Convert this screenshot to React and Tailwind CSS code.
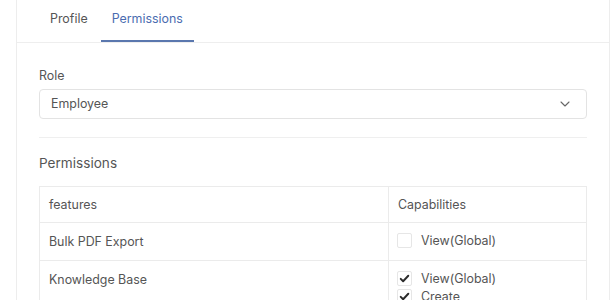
import { ChevronDown } from 'lucide-react'

const rows = [
    { feature: 'Bulk PDF Export', caps: [{ label: 'View(Global)', checked: false }] },
    {
        feature: 'Knowledge Base',
        caps: [
            { label: 'View(Global)', checked: true },
            { label: 'Create', checked: true },
            { label: 'Edit', checked: true }
        ]
    }
]

const Checkbox = ({ checked }) => (
    <span className="flex h-[15px] w-[15px] shrink-0 items-center justify-center rounded-[2px] border border-[#e6e6e6] bg-white">
        {checked && (
            <svg viewBox="0 0 16 16" className="h-[11px] w-[11px]">
                <path d="M2.5 8.5 L6 12 L13.5 4" fill="none" stroke="#2b2b2b" strokeWidth="2.8" strokeLinecap="round" strokeLinejoin="round" />
            </svg>
        )}
    </span>
)

const App = () => {
    return (
        <div className="h-[300px] overflow-hidden bg-white pl-4 font-['Inter',sans-serif] text-[12.4px] text-[#555]">
            <div className="h-[400px] border-x border-[#ededed] bg-white">
                {/* Tabs */}
                <div className="flex gap-0.5 border-b border-[#eeeeee] px-[22px]">
                    <button className="border-b-2 border-transparent px-[11px] pt-[9px] pb-[11px] leading-5 text-[#555]">
                        Profile
                    </button>
                    <button className="border-b-2 border-[#5a77ae] px-[11px] pt-[9px] pb-[11px] leading-5 text-[#4a6cb0]">
                        Permissions
                    </button>
                </div>

                <div className="px-[22px] pt-6">
                    <label className="mb-1 block leading-[18px] text-[#555]">Role</label>
                    <div className="flex h-[30px] items-center justify-between rounded-[4px] border border-[#e3e3e3] pl-[11px] pr-[13px] text-[#555]">
                        <span>Employee</span>
                        <ChevronDown className="h-4 w-4 text-[#666]" strokeWidth={1.6} />
                    </div>

                    <div className="mt-[18px] border-t border-[#efefef]" />

                    <h2 className="mt-[15px] mb-[13px] text-[13.6px] leading-5 text-[#555]">Permissions</h2>

                    <table className="w-full border-collapse border border-[#ebebeb] text-left">
                        <thead>
                            <tr>
                                <th className="w-[349px] border border-[#ebebeb] px-[9px] py-[9px] font-normal leading-[17px]">features</th>
                                <th className="border border-[#ebebeb] px-[9px] py-[9px] font-normal leading-[17px]">Capabilities</th>
                            </tr>
                        </thead>
                        <tbody>
                            {rows.map((row) => (
                                <tr key={row.feature}>
                                    <td className="border border-[#ebebeb] px-[9px] py-[10px] align-top leading-[17px]">{row.feature}</td>
                                    <td className="border border-[#ebebeb] px-[8px] pt-[9px] pb-[10px] align-top leading-[17px]">
                                        <div className="flex flex-col gap-px">
                                            {row.caps.map((cap) => (
                                                <div key={cap.label} className="flex items-center gap-[9px]">
                                                    <Checkbox checked={cap.checked} />
                                                    <span>{cap.label}</span>
                                                </div>
                                            ))}
                                        </div>
                                    </td>
                                </tr>
                            ))}
                        </tbody>
                    </table>
                </div>
            </div>
        </div>
    )
}

export default App
